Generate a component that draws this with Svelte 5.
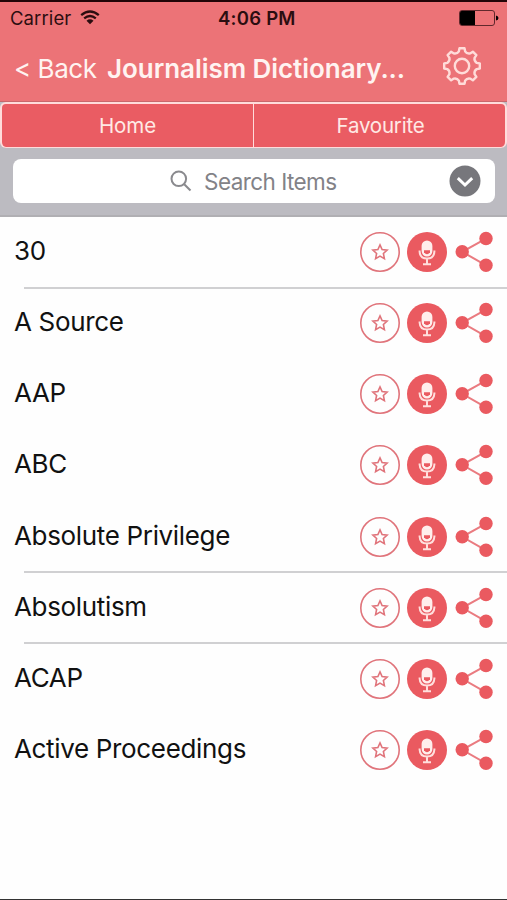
<script>
  const items = [
    { title: '30', separator: true },
    { title: 'A Source', separator: false },
    { title: 'AAP', separator: false },
    { title: 'ABC', separator: false },
    { title: 'Absolute Privilege', separator: true },
    { title: 'Absolutism', separator: true },
    { title: 'ACAP', separator: false },
    { title: 'Active Proceedings', separator: false },
  ];

  /**
   * Outline of the settings gear, eight teeth around the origin.
   * @param {number} outer
   * @param {number} inner
   */
  function gearPath(outer, inner) {
    let d = '';
    for (let i = 0; i <= 8; i++) {
      const corners = [
        [inner, -12],
        [outer, -8],
        [outer, 8],
        [inner, 12],
      ];
      corners.forEach(([r, offset], n) => {
        if (i === 8 && n > 0) return;
        const a = ((i * 45 + offset - 90) * Math.PI) / 180;
        const point = `${(r * Math.cos(a)).toFixed(2)} ${(r * Math.sin(a)).toFixed(2)}`;
        if (n === 0 && i > 0) {
          d += `A4.8 4.8 0 0 0 ${point}`;
        } else {
          d += `${d ? 'L' : 'M'}${point}`;
        }
      });
    }
    return d + 'Z';
  }
</script>

<div class="screen">
  <header>
    <div class="status">
      <span class="carrier">Carrier</span>
      <svg class="wifi" width="20" height="15" viewBox="0 0 20 15">
        <path d="M1.2 5.2Q10-2.2 18.8 5.2M4.2 8.4Q10 3.6 15.8 8.4" />
        <path class="dot" d="M6.5 10.8Q10 7.9 13.5 10.8L10 14.3Z" />
      </svg>
      <span class="time">4:06 PM</span>
      <svg class="battery" width="40" height="17" viewBox="0 0 40 17">
        <rect x="0.5" y="0.5" width="35" height="15" rx="2.5" />
        <path d="M2.5 1H16V15H2.5Q1 15 1 13V3Q1 1 2.5 1ZM37 5.5Q39.5 6 39.5 8T37 10.5Z" />
      </svg>
    </div>
    <div class="nav">
      <span class="back">&lt; Back</span>
      <h1>Journalism Dictionary...</h1>
      <svg class="gear" width="40" height="40" viewBox="-20 -20 40 40">
        <path d={gearPath(18, 15)} />
        <circle r="7.2" />
      </svg>
    </div>
  </header>

  <div class="tabs">
    <div class="tab home">Home</div>
    <div class="tab favourite">Favourite</div>
  </div>

  <div class="search">
    <div class="field">
      <svg class="lens" width="22" height="22" viewBox="0 0 22 22">
        <circle cx="8.8" cy="8.8" r="7.3" />
        <path d="M14.2 14.2L20.5 20.5" />
      </svg>
      <span class="placeholder">Search Items</span>
      <svg class="chevron" width="32" height="32" viewBox="0 0 32 32">
        <circle cx="16" cy="16" r="15.5" />
        <path d="M8.8 13.2L16 20L23.2 13.2" />
      </svg>
    </div>
  </div>

  <ul>
    {#each items as item}
      <li class:separator={item.separator}>
        <span class="title">{item.title}</span>
        <svg class="star" width="40" height="40" viewBox="0 0 40 40">
          <circle cx="20" cy="20" r="19.2" />
          <path
            d="M20 12.9L22.1 17.6L27.1 18.1L23.4 21.5L24.4 26.7L20 24.1L15.6 26.7L16.6 21.5L12.9 18.1L17.9 17.6Z"
          />
        </svg>
        <svg class="mic" width="40" height="40" viewBox="0 0 40 40">
          <circle cx="20" cy="20" r="20" />
          <rect x="14.6" y="8.5" width="10.8" height="16" rx="5.4" />
          <path class="stand" d="M12.6 18.5V19.5Q12.9 26.6 20 26.6T27.4 19.5V18.5M20 26.6V32M16 32.2H24" />
          <path class="grille" d="M17 18.2H23V20.3Q20 24 17 20.3Z" />
        </svg>
        <svg class="share" width="38" height="42" viewBox="0 0 38 42">
          <path d="M31 7.7L7.2 20.8L31 34.3" />
          <circle cx="31" cy="7.5" r="6.7" />
          <circle cx="7.2" cy="20.8" r="6.7" />
          <circle cx="31" cy="34.3" r="6.7" />
        </svg>
      </li>
    {/each}
  </ul>
</div>

<style>
  :global(body) {
    margin: 0;
  }

  .screen {
    box-sizing: border-box;
    width: 507px;
    height: 900px;
    display: flex;
    flex-direction: column;
    overflow: hidden;
    background: #fefefe;
    border-top: 2px solid #210507;
    border-bottom: 1px solid #333;
    font-family: Inter, 'Liberation Sans', sans-serif;
  }

  header {
    height: 100px;
    flex: none;
    background: #ec7377;
    border-bottom: 1px solid #c9676c;
    box-sizing: border-box;
  }

  svg {
    display: block;
    flex: none;
  }

  .status {
    display: flex;
    align-items: center;
    height: 32px;
    padding-left: 10px;
    color: #2b0d10;
    font-size: 18.5px;
  }

  .carrier {
    width: 70px;
    letter-spacing: 0.1px;
  }

  .wifi {
    margin-top: -2px;
    fill: none;
    stroke: #2b0d10;
    stroke-width: 2.3;
  }

  .wifi .dot {
    fill: #2b0d10;
    stroke: none;
  }

  .time {
    width: 100px;
    margin-left: 118px;
    font-weight: 600;
    letter-spacing: 0.25px;
    white-space: nowrap;
  }

  .battery {
    margin-left: 141px;
    fill: #000;
  }

  .battery rect {
    fill: none;
    stroke: #60282c;
  }

  .nav {
    display: flex;
    align-items: center;
    height: 68px;
    padding-left: 14px;
    color: #fff3f1;
    font-size: 26px;
    white-space: nowrap;
  }

  .back {
    width: 93px;
    font-weight: 400;
    letter-spacing: -0.45px;
  }

  h1 {
    width: 335px;
    margin: 0;
    font-size: 26px;
    font-weight: 600;
    letter-spacing: -0.05px;
  }

  .gear {
    margin-top: -4px;
    fill: none;
    stroke: #ffdcd9;
    stroke-width: 2.4;
    stroke-linejoin: round;
  }

  .tabs {
    display: flex;
    flex: none;
    height: 46px;
    background: #bcbbc1;
  }

  .tab {
    box-sizing: border-box;
    display: flex;
    align-items: center;
    justify-content: center;
    background: #ea5c63;
    border: 2px solid #ffdcdb;
    border-bottom-width: 1px;
    color: #ffe9e5;
    font-size: 20.5px;
  }

  .home {
    width: 253px;
    border-right: 0;
    border-radius: 6px 0 0 6px;
    letter-spacing: -0.1px;
  }

  .favourite {
    width: 254px;
    padding-left: 2px;
    border-left-width: 1px;
    border-radius: 0 6px 6px 0;
    letter-spacing: -0.2px;
  }

  .search {
    box-sizing: border-box;
    flex: none;
    height: 69px;
    padding: 11px 12px 0 13px;
    background: #bcbbc1;
    border-bottom: 2px solid #b0afb3;
  }

  .field {
    display: flex;
    align-items: center;
    height: 44px;
    padding-left: 157px;
    background: #fff;
    border-radius: 8px;
  }

  .lens {
    fill: none;
    stroke: #8a8a8e;
    stroke-width: 2;
  }

  .placeholder {
    width: 245px;
    margin-left: 12px;
    color: #828287;
    font-size: 22.5px;
    letter-spacing: -0.55px;
    white-space: nowrap;
  }

  .chevron {
    fill: #77777c;
  }

  .chevron path {
    fill: none;
    stroke: #fff;
    stroke-width: 3;
  }

  ul {
    margin: -0.5px 0 0;
    padding: 0;
    list-style: none;
  }

  li {
    position: relative;
    display: flex;
    align-items: center;
    height: 71.15px;
    padding-left: 14px;
  }

  .separator::after {
    content: '';
    position: absolute;
    left: 24px;
    right: 0;
    bottom: -1px;
    height: 2px;
    background: #d0d0d2;
  }

  .title {
    width: 346px;
    margin-top: -3px;
    color: #111;
    font-size: 26px;
    letter-spacing: -0.34px;
    white-space: nowrap;
  }

  .star {
    fill: none;
    stroke: #e0747b;
    stroke-width: 1.6;
  }

  .mic {
    margin-left: 7px;
    fill: #ea5a60;
  }

  .mic rect {
    fill: #ffeeec;
  }

  .mic .stand {
    fill: none;
    stroke: #ffdfdd;
    stroke-width: 2;
  }

  .mic .grille {
    fill: #ea5a60;
  }

  .share {
    margin-left: 8px;
    fill: #ea5a60;
  }

  .share path {
    fill: none;
    stroke: #ea7b80;
    stroke-width: 2;
  }
</style>
